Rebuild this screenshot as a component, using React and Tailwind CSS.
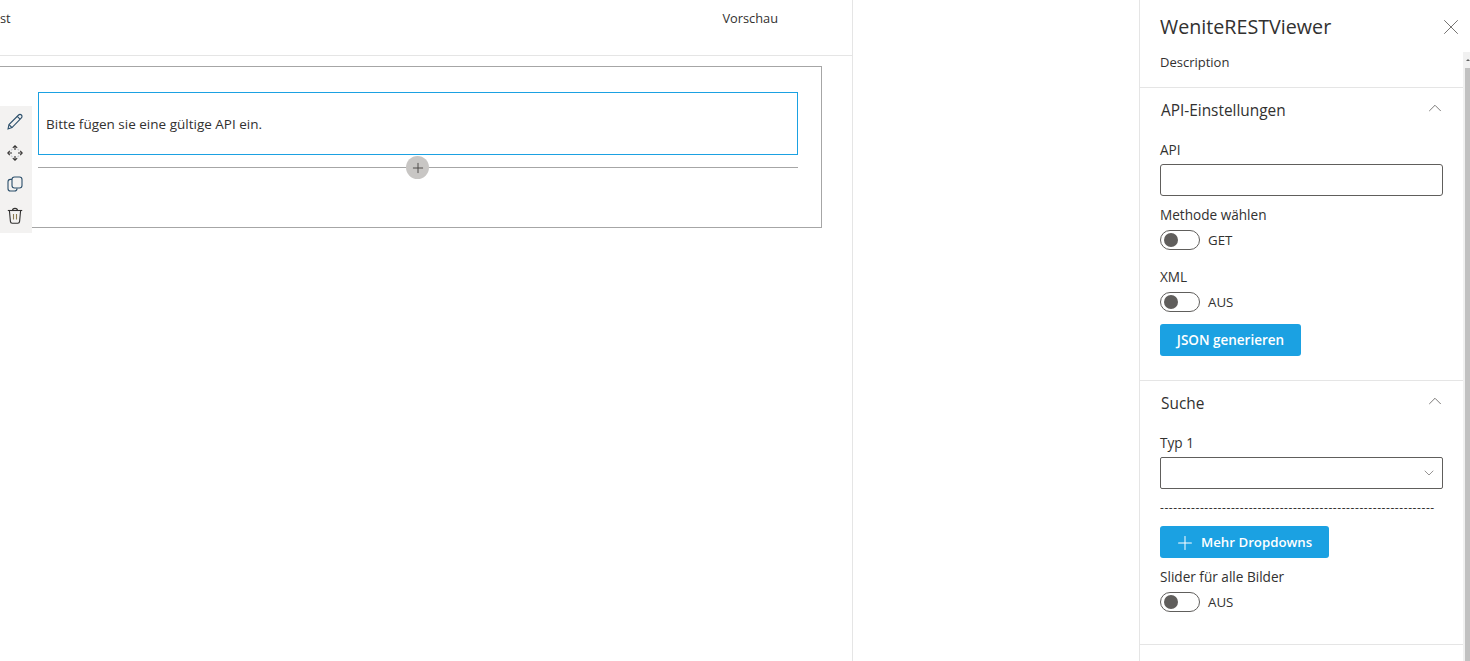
import React from 'react'
import { X, ChevronUp, ChevronDown, Plus } from 'lucide-react'

const FONT = "font-['Open_Sans','Noto_Sans',sans-serif]"

function Toggle({ label }) {
  return (
    <div className="flex items-center h-[20px]">
      <div className="w-[40px] h-[20px] rounded-full border border-[#605e5c] flex items-center pl-[3px]">
        <div className="w-[14px] h-[14px] rounded-full bg-[#605e5c]" />
      </div>
      <span className="ml-[8px] pt-[1px] text-[13.3px] text-[#323130]">{label}</span>
    </div>
  )
}

function GroupHead({ title }) {
  return (
    <div className="flex items-center justify-between h-[46px] pl-[21px] pr-[17px]">
      <span className="text-[15.4px] leading-[20px] text-[#323130]">{title}</span>
      <ChevronUp size={22} strokeWidth={0.9} className="mb-[6px] text-[#605e5c]" />
    </div>
  )
}

function Label({ children }) {
  return <div className="text-[13.6px] leading-[18px] text-[#323130] font-medium">{children}</div>
}

// toolbar icons are hand drawn, the package ones have other strokes
function PencilIcon() {
  return (
    <svg width="16" height="17" viewBox="0 0 16 17" fill="none" stroke="#2b4f6b" strokeWidth="1.1">
      <path d="M1 16 L2 11.6 L11.6 2 C12.4 1.2 13.6 1.2 14.4 2 C15.2 2.8 15.2 4 14.4 4.8 L5 14.6 Z" />
      <path d="M10.2 3.4 L13 6.2 M2 11.6 L5 14.6" />
    </svg>
  )
}

function MoveIcon() {
  return (
    <svg width="16" height="16" viewBox="0 0 16 16" fill="none" stroke="#323130" strokeWidth="1.1">
      <path d="M5.8 2.8 L8 .8 L10.2 2.8 M5.8 13.2 L8 15.2 L10.2 13.2 M2.8 5.8 L.8 8 L2.8 10.2 M13.2 5.8 L15.2 8 L13.2 10.2" />
      <path d="M8 1 V5 M8 11 V15 M1 8 H5 M11 8 H15" />
      <path d="M5.4 4 L4 5.4 M10.6 4 L12 5.4 M5.4 12 L4 10.6 M10.6 12 L12 10.6" stroke="#c3c8cf" />
    </svg>
  )
}

function CopyIcon() {
  return (
    <svg width="16" height="16" viewBox="0 0 16 16" fill="none" stroke="#2b4f6b" strokeWidth="1.1">
      <rect x="5" y="1" width="10" height="11" rx="2.5" />
      <path d="M5 3.4 H3.4 C2 3.4 1 4.4 1 5.8 V12.4 C1 14 2 15 3.4 15 H7.6 C9 15 10 14 10 12.4" />
    </svg>
  )
}

function TrashIcon() {
  return (
    <svg width="16" height="17" viewBox="0 0 16 17" fill="none" stroke="#323130" strokeWidth="1.1">
      <path d="M.8 3.5 H15.2" />
      <path d="M5.5 3.5 C5.5 .6 10.5 .6 10.5 3.5" />
      <path d="M2.4 3.5 L3.4 14.4 C3.5 15.6 4.2 16.2 5.2 16.2 H10.8 C11.8 16.2 12.5 15.6 12.6 14.4 L13.6 3.5" />
      <path d="M6.5 7 V12.5 M9.5 7 V12.5" stroke="#8a7a50" />
    </svg>
  )
}

export default function App() {
  return (
    <div className={`flex h-[661px] w-[1470px] overflow-hidden bg-white ${FONT}`}>
      <div className="w-[1139px] shrink-0">
        <div className="w-[853px] h-[661px] border-r border-[#e5e5e5]">
          <div className="h-[56px] border-b border-[#e5e5e5] flex justify-between pt-[9px] pr-[74px] text-[12.8px] text-[#323130]">
            <span>st</span>
            <span>Vorschau</span>
          </div>
          <div className="pt-[10px]">
            <div className="relative w-[822px] h-[162px] border-t border-r border-b border-[#a6a6a6] pl-[38px] pt-[25px]">
              <div className="absolute left-0 top-[39px] w-[32px] h-[127px] bg-[#f3f2f1] flex flex-col items-center pr-[3px] pt-[7px] gap-[15px]">
                <PencilIcon />
                <MoveIcon />
                <CopyIcon />
                <TrashIcon />
              </div>
              <div className="w-[760px] h-[63px] border border-[#1ba1e2] flex items-center pl-[7px] pt-[2px] text-[13.5px] text-[#323130]">
                Bitte fügen sie eine gültige API ein.
              </div>
              <div className="relative w-[760px] h-px bg-[#a6a6a6] mt-[12px]">
                <div className="absolute left-[368px] top-[-11px] w-[23px] h-[23px] rounded-full bg-[#c8c6c4] flex items-center justify-center">
                  <Plus size={16} strokeWidth={1.4} className="text-[#484644]" />
                </div>
              </div>
            </div>
          </div>
        </div>
      </div>

      <div className="relative w-[331px] h-[661px] border-l border-[#e5e5e5]">
        <div className="absolute right-0 top-[52px] w-[7px] h-[609px] bg-[#f1f1f1] pl-[2px]">
          <div className="h-[16px] flex items-center justify-center">
            <div className="w-0 h-0 border-l-[2px] border-r-[2px] border-b-[2px] border-l-transparent border-r-transparent border-b-[#606060]" />
          </div>
          <div className="h-[593px] bg-[#c1c1c1]" />
        </div>
        <div className="flex items-center justify-between h-[54px] pl-[20px] pr-[6px]">
          <span className="text-[19.7px] text-[#323130]">WeniteRESTViewer</span>
          <X size={26} strokeWidth={0.8} className="text-[#605e5c]" />
        </div>
        <div className="w-[323px] h-[34px] pl-[20px] text-[13px] leading-[16px] text-[#323130] border-b border-[#e5e5e5]">
          Description
        </div>

        <div className="w-[323px] h-[293px] border-b border-[#e5e5e5]">
          <GroupHead title="API-Einstellungen" />
          <div className="pl-[20px]">
            <div className="mt-[7px]"><Label>API</Label></div>
            <div className="w-[283px] h-[32px] mt-[5px] rounded-[3px] border border-[#605e5c]" />
            <div className="mt-[10px]"><Label>Methode wählen</Label></div>
            <div className="mt-[6px]"><Toggle label="GET" /></div>
            <div className="mt-[18px]"><Label>XML</Label></div>
            <div className="mt-[6px]"><Toggle label="AUS" /></div>
            <div className="mt-[12px] w-[141px] h-[32px] rounded-[3px] bg-[#1ba1e2] text-white text-[13.5px] font-semibold flex items-center justify-center">
              JSON generieren
            </div>
          </div>
        </div>

        <div className="w-[323px] h-[264px] border-b border-[#e5e5e5]">
          <GroupHead title="Suche" />
          <div className="pl-[20px]">
            <div className="mt-[7px]"><Label>Typ 1</Label></div>
            <div className="w-[283px] h-[32px] mt-[5px] rounded-[2px] border border-[#605e5c] flex items-center justify-end pr-[5px]">
              <ChevronDown size={16} strokeWidth={1} className="text-[#605e5c]" />
            </div>
            <div className="mt-[10px] w-[283px] overflow-hidden whitespace-nowrap text-[12px] tracking-[0.57px] leading-[18px] text-[#323130]">
              {'-'.repeat(62)}
            </div>
            <div className="mt-[9px] w-[169px] h-[32px] rounded-[3px] bg-[#1ba1e2] text-white text-[13.25px] font-semibold flex items-center pl-[14px] pt-[1px] gap-[5px]">
              <Plus size={22} strokeWidth={1.1} />
              <span>Mehr Dropdowns</span>
            </div>
            <div className="mt-[10px]"><Label>Slider für alle Bilder</Label></div>
            <div className="mt-[6px]"><Toggle label="AUS" /></div>
          </div>
        </div>
      </div>
    </div>
  )
}
